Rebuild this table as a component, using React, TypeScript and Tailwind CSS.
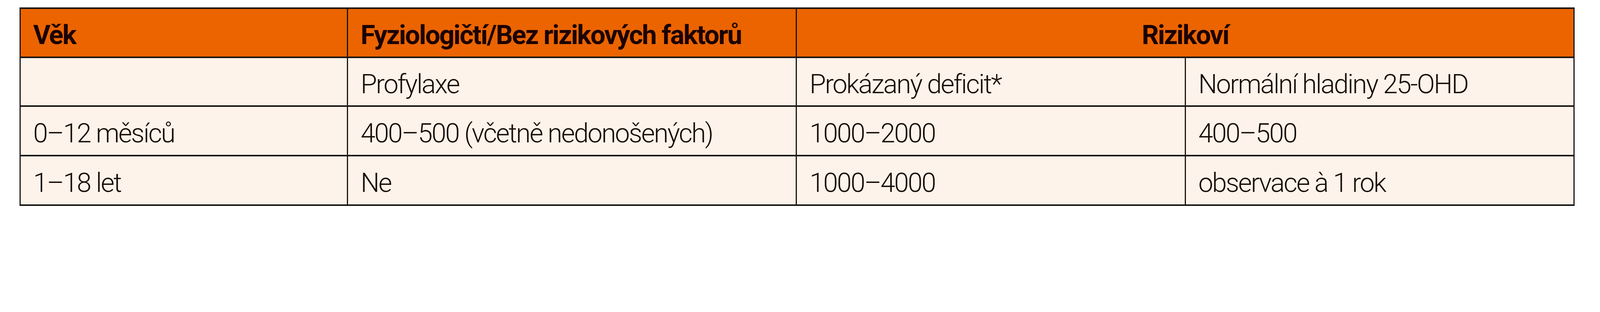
const rows = [
  { age: '0–12 měsíců', fyz: '400–500 (včetně nedonošených)', deficit: '1000–2000', normal: '400–500' },
  { age: '1–18 let', fyz: 'Ne', deficit: '1000–4000', normal: 'observace à 1 rok' },
];

const cell = 'border-x-[3.5px] border-y-4 border-[#1a1512] align-middle pl-8 pr-3 pt-[12px] pb-0 text-left';

export default function App() {
  return (
    <div className="h-[555px] bg-white pt-[19px] pl-[50px]" style={{ fontFamily: 'Roboto, "Liberation Sans", sans-serif' }}>
      <table className="table-fixed border-collapse w-[3981px] text-[68px] leading-none text-[#160b05] whitespace-nowrap">
        <colgroup>
          <col className="w-[838px]" />
          <col className="w-[1149px]" />
          <col className="w-[995px]" />
          <col className="w-[995px]" />
        </colgroup>
        <thead>
          <tr className="h-[126px] bg-[#eb6400] font-bold tracking-[-0.035em] text-[#1a0202]">
            <th className={cell}>Věk</th>
            <th className={cell}>Fyziologičtí/Bez rizikových faktorů</th>
            <th colSpan={2} className={`${cell} !text-center !pl-0 !pr-0`}>Rizikoví</th>
          </tr>
        </thead>
        <tbody className="bg-[#fef3ea] font-light tracking-[-0.04em]">
          <tr className="h-[125px]">
            <td className={cell}></td>
            <td className={cell}>Profylaxe</td>
            <td className={cell}>Prokázaný deficit*</td>
            <td className={cell}>Normální hladiny 25-OHD</td>
          </tr>
          {rows.map((r) => (
            <tr key={r.age} className="h-[127px]">
              <td className={cell}>{r.age}</td>
              <td className={cell}>{r.fyz}</td>
              <td className={cell}>{r.deficit}</td>
              <td className={cell}>{r.normal}</td>
            </tr>
          ))}
        </tbody>
      </table>
    </div>
  );
}
